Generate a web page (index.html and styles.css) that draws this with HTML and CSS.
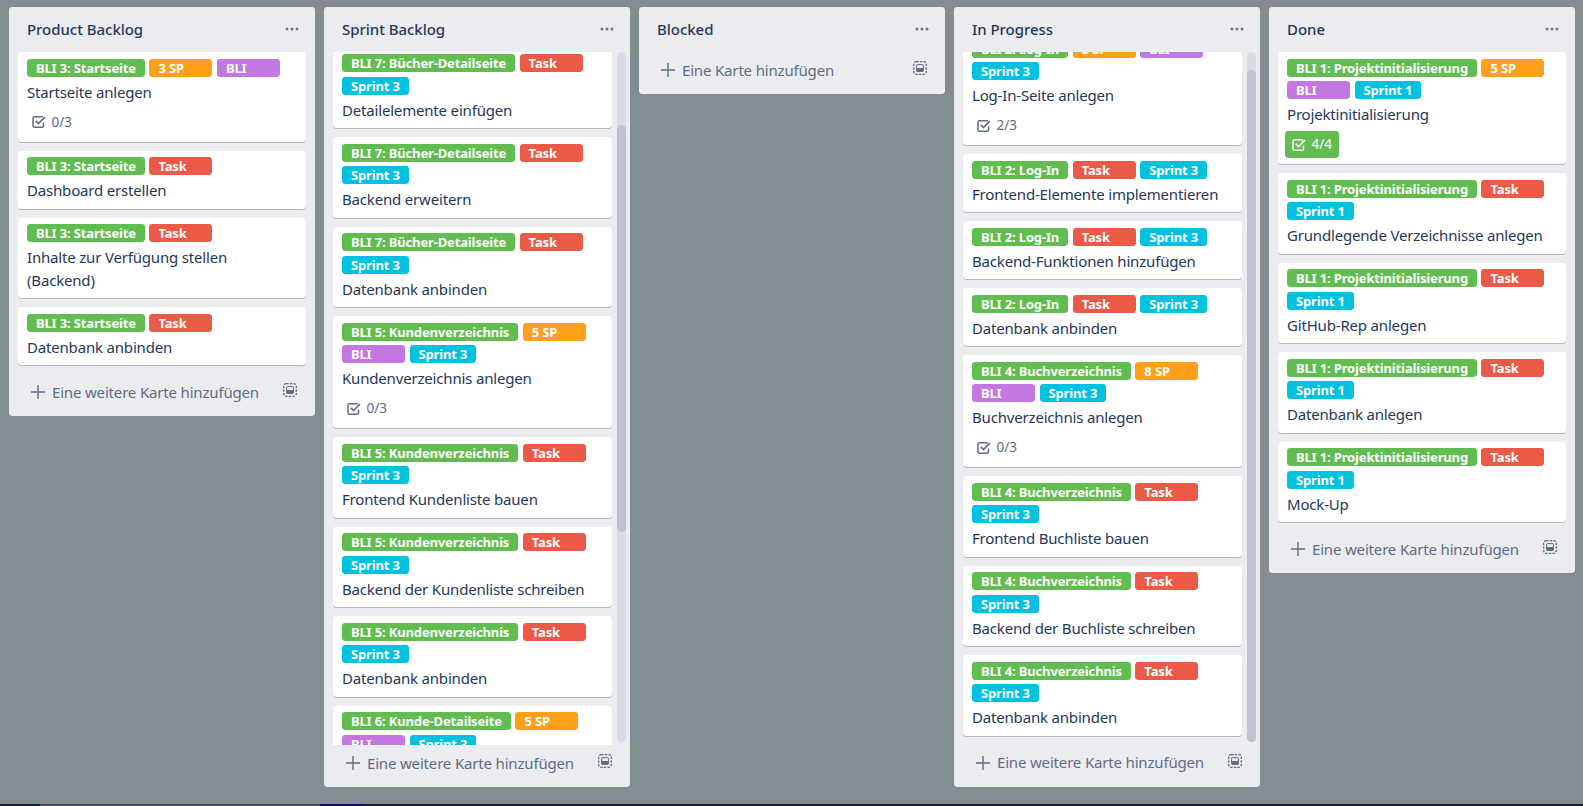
FILE: index.html
```html
<!DOCTYPE html>
<html lang="de">
<head>
    <meta charset="UTF-8">
    <title>Board</title>
    <link rel="stylesheet" href="styles.css">
</head>
<body>
    <svg class="sprites" width="0" height="0">
        <symbol id="dots" viewBox="0 0 14 4"><circle cx="2" cy="2" r="1.5"/><circle cx="7" cy="2" r="1.5"/><circle cx="12" cy="2" r="1.5"/></symbol>
        <symbol id="plus" viewBox="0 0 14 14"><path d="M7 0v14M0 7h14" fill="none" stroke="currentColor" stroke-width="1.4"/></symbol>
        <symbol id="check" viewBox="0 0 14 14"><path d="M11.5 7.5v3.2a1.6 1.6 0 0 1-1.6 1.6H2.6A1.6 1.6 0 0 1 1 10.7V3.3a1.6 1.6 0 0 1 1.6-1.6h8.3" fill="none" stroke="currentColor" stroke-width="1.5"/><path d="M3.8 5.8l2.7 2.7 6.5-6.5" fill="none" stroke="currentColor" stroke-width="1.7"/></symbol>
        <symbol id="template" viewBox="0 0 14 14"><rect x=".7" y=".7" width="12.6" height="12.6" rx="2.6" fill="none" stroke="currentColor" stroke-width="1.3" stroke-dasharray="2.4 1.2"/><rect x="3.6" y="3.6" width="6.8" height="6.8" rx=".6" fill="none" stroke="currentColor" stroke-width="1"/><rect x="3.6" y="7" width="6.8" height="3.4"/></symbol>
    </svg>

    <div class="board">
        <!-- Product Backlog -->
        <section class="list">
            <header class="list-header"><h2>Product Backlog</h2><svg class="menu"><use href="#dots"/></svg></header>
            <div class="list-body">
                <div class="cards">
                    <article class="card">
                        <div class="labels"><span class="label green">BLI 3: Startseite</span><span class="label orange">3 SP</span><span class="label purple">BLI</span></div>
                        <p class="title">Startseite anlegen</p>
                        <div class="badges"><span class="badge"><svg class="icon"><use href="#check"/></svg>0/3</span></div>
                    </article>
                    <article class="card">
                        <div class="labels"><span class="label green">BLI 3: Startseite</span><span class="label red">Task</span></div>
                        <p class="title">Dashboard erstellen</p>
                    </article>
                    <article class="card">
                        <div class="labels"><span class="label green">BLI 3: Startseite</span><span class="label red">Task</span></div>
                        <p class="title">Inhalte zur Verfügung stellen (Backend)</p>
                    </article>
                    <article class="card">
                        <div class="labels"><span class="label green">BLI 3: Startseite</span><span class="label red">Task</span></div>
                        <p class="title">Datenbank anbinden</p>
                    </article>
                </div>
            </div>
            <footer class="composer"><svg class="plus"><use href="#plus"/></svg><span class="composer-text">Eine weitere Karte hinzufügen</span><svg class="template"><use href="#template"/></svg></footer>
        </section>

        <!-- Sprint Backlog -->
        <section class="list">
            <header class="list-header"><h2>Sprint Backlog</h2><svg class="menu"><use href="#dots"/></svg></header>
            <div class="list-body scrolled">
                <div class="cards sprint-cards">
                    <article class="card">
                        <div class="labels"><span class="label green">BLI 7: Bücher-Detailseite</span><span class="label red">Task</span><span class="label sky">Sprint 3</span></div>
                        <p class="title">Detailelemente einfügen</p>
                    </article>
                    <article class="card">
                        <div class="labels"><span class="label green">BLI 7: Bücher-Detailseite</span><span class="label red">Task</span><span class="label sky">Sprint 3</span></div>
                        <p class="title">Backend erweitern</p>
                    </article>
                    <article class="card">
                        <div class="labels"><span class="label green">BLI 7: Bücher-Detailseite</span><span class="label red">Task</span><span class="label sky">Sprint 3</span></div>
                        <p class="title">Datenbank anbinden</p>
                    </article>
                    <article class="card">
                        <div class="labels"><span class="label green">BLI 5: Kundenverzeichnis</span><span class="label orange">5 SP</span><span class="label purple">BLI</span><span class="label sky">Sprint 3</span></div>
                        <p class="title">Kundenverzeichnis anlegen</p>
                        <div class="badges"><span class="badge"><svg class="icon"><use href="#check"/></svg>0/3</span></div>
                    </article>
                    <article class="card">
                        <div class="labels"><span class="label green">BLI 5: Kundenverzeichnis</span><span class="label red">Task</span><span class="label sky">Sprint 3</span></div>
                        <p class="title">Frontend Kundenliste bauen</p>
                    </article>
                    <article class="card">
                        <div class="labels"><span class="label green">BLI 5: Kundenverzeichnis</span><span class="label red">Task</span><span class="label sky">Sprint 3</span></div>
                        <p class="title">Backend der Kundenliste schreiben</p>
                    </article>
                    <article class="card">
                        <div class="labels"><span class="label green">BLI 5: Kundenverzeichnis</span><span class="label red">Task</span><span class="label sky">Sprint 3</span></div>
                        <p class="title">Datenbank anbinden</p>
                    </article>
                    <article class="card">
                        <div class="labels"><span class="label green">BLI 6: Kunde-Detailseite</span><span class="label orange">5 SP</span><span class="label purple">BLI</span><span class="label sky">Sprint 3</span></div>
                    </article>
                </div>
                <div class="track"><div class="thumb sprint-thumb"></div></div>
            </div>
            <footer class="composer"><svg class="plus"><use href="#plus"/></svg><span class="composer-text">Eine weitere Karte hinzufügen</span><svg class="template"><use href="#template"/></svg></footer>
        </section>

        <!-- Blocked -->
        <section class="list">
            <header class="list-header"><h2>Blocked</h2><svg class="menu"><use href="#dots"/></svg></header>
            <footer class="composer"><svg class="plus"><use href="#plus"/></svg><span class="composer-text">Eine Karte hinzufügen</span><svg class="template"><use href="#template"/></svg></footer>
        </section>

        <!-- In Progress -->
        <section class="list">
            <header class="list-header"><h2>In Progress</h2><svg class="menu"><use href="#dots"/></svg></header>
            <div class="list-body scrolled">
                <div class="cards progress-cards">
                    <article class="card">
                        <div class="labels"><span class="label green">BLI 2: Log-In</span><span class="label orange">5 SP</span><span class="label purple">BLI</span><span class="label sky">Sprint 3</span></div>
                        <p class="title">Log-In-Seite anlegen</p>
                        <div class="badges"><span class="badge"><svg class="icon"><use href="#check"/></svg>2/3</span></div>
                    </article>
                    <article class="card">
                        <div class="labels"><span class="label green">BLI 2: Log-In</span><span class="label red">Task</span><span class="label sky">Sprint 3</span></div>
                        <p class="title">Frontend-Elemente implementieren</p>
                    </article>
                    <article class="card">
                        <div class="labels"><span class="label green">BLI 2: Log-In</span><span class="label red">Task</span><span class="label sky">Sprint 3</span></div>
                        <p class="title">Backend-Funktionen hinzufügen</p>
                    </article>
                    <article class="card">
                        <div class="labels"><span class="label green">BLI 2: Log-In</span><span class="label red">Task</span><span class="label sky">Sprint 3</span></div>
                        <p class="title">Datenbank anbinden</p>
                    </article>
                    <article class="card">
                        <div class="labels"><span class="label green">BLI 4: Buchverzeichnis</span><span class="label orange">8 SP</span><span class="label purple">BLI</span><span class="label sky">Sprint 3</span></div>
                        <p class="title">Buchverzeichnis anlegen</p>
                        <div class="badges"><span class="badge"><svg class="icon"><use href="#check"/></svg>0/3</span></div>
                    </article>
                    <article class="card">
                        <div class="labels"><span class="label green">BLI 4: Buchverzeichnis</span><span class="label red">Task</span><span class="label sky">Sprint 3</span></div>
                        <p class="title">Frontend Buchliste bauen</p>
                    </article>
                    <article class="card">
                        <div class="labels"><span class="label green">BLI 4: Buchverzeichnis</span><span class="label red">Task</span><span class="label sky">Sprint 3</span></div>
                        <p class="title">Backend der Buchliste schreiben</p>
                    </article>
                    <article class="card">
                        <div class="labels"><span class="label green">BLI 4: Buchverzeichnis</span><span class="label red">Task</span><span class="label sky">Sprint 3</span></div>
                        <p class="title">Datenbank anbinden</p>
                    </article>
                </div>
                <div class="track"><div class="thumb progress-thumb"></div></div>
            </div>
            <footer class="composer"><svg class="plus"><use href="#plus"/></svg><span class="composer-text">Eine weitere Karte hinzufügen</span><svg class="template"><use href="#template"/></svg></footer>
        </section>

        <!-- Done -->
        <section class="list">
            <header class="list-header"><h2>Done</h2><svg class="menu"><use href="#dots"/></svg></header>
            <div class="list-body">
                <div class="cards">
                    <article class="card">
                        <div class="labels"><span class="label green">BLI 1: Projektinitialisierung</span><span class="label orange">5 SP</span><span class="label purple">BLI</span><span class="label sky">Sprint 1</span></div>
                        <p class="title">Projektinitialisierung</p>
                        <div class="badges"><span class="badge complete"><svg class="icon"><use href="#check"/></svg>4/4</span></div>
                    </article>
                    <article class="card">
                        <div class="labels"><span class="label green">BLI 1: Projektinitialisierung</span><span class="label red">Task</span><span class="label sky">Sprint 1</span></div>
                        <p class="title">Grundlegende Verzeichnisse anlegen</p>
                    </article>
                    <article class="card">
                        <div class="labels"><span class="label green">BLI 1: Projektinitialisierung</span><span class="label red">Task</span><span class="label sky">Sprint 1</span></div>
                        <p class="title">GitHub-Rep anlegen</p>
                    </article>
                    <article class="card">
                        <div class="labels"><span class="label green">BLI 1: Projektinitialisierung</span><span class="label red">Task</span><span class="label sky">Sprint 1</span></div>
                        <p class="title">Datenbank anlegen</p>
                    </article>
                    <article class="card">
                        <div class="labels"><span class="label green">BLI 1: Projektinitialisierung</span><span class="label red">Task</span><span class="label sky">Sprint 1</span></div>
                        <p class="title">Mock-Up</p>
                    </article>
                </div>
            </div>
            <footer class="composer"><svg class="plus"><use href="#plus"/></svg><span class="composer-text">Eine weitere Karte hinzufügen</span><svg class="template"><use href="#template"/></svg></footer>
        </section>
    </div>

    <div class="taskbar"><span class="seg-a"></span><span class="seg-b"></span><span class="seg-c"></span></div>
</body>
</html>
```

FILE: styles.css
```css
* {
    box-sizing: border-box;
}
html, body {
    height: 100%;
}
body {
    margin: 0;
    display: flex;
    flex-direction: column;
    overflow: hidden;
    background-color: #838c91;
    font-family: "Noto Sans", sans-serif;
    font-size: 15px;
    line-height: 22.25px;
    color: #253858;
}
.sprites {
    position: absolute;
}
.board {
    flex: 1;
    min-height: 0;
    display: flex;
    align-items: flex-start;
    gap: 9px;
    padding: 7px 0 17px 9px;
}
.list {
    width: 306px;
    max-height: 100%;
    flex-shrink: 0;
    display: flex;
    flex-direction: column;
    background-color: #ebecf0;
    border-radius: 3.4px;
}
.list-header {
    height: 45px;
    flex-shrink: 0;
    display: flex;
    align-items: center;
    justify-content: space-between;
    padding: 0 16px 1px 18px;
}
.list-header h2 {
    margin: 0;
    font-size: 15px;
    font-weight: 500;
    letter-spacing: -0.04px;
}
.menu {
    width: 14px;
    height: 4px;
    fill: #6b778c;
}
.list-body {
    display: flex;
    min-height: 0;
    padding: 0 9px;
}
.list-body.scrolled {
    flex: 1;
    gap: 5px;
    padding-right: 4px;
}
.cards {
    flex: 1;
    min-width: 0;
    overflow: hidden;
}
.sprint-cards .card:first-child {
    margin-top: -4.5px;
}
.progress-cards .card:first-child {
    margin-top: -19px;
}
.card {
    margin-bottom: 9px;
    padding: 6.75px 9px 2px;
    background: white;
    border-radius: 3.4px;
    box-shadow: 0 1px 0 rgba(9, 30, 66, 0.25);
}
.labels {
    display: flex;
    flex-wrap: wrap;
    gap: 4.5px;
    margin-bottom: 4.5px;
}
.label {
    min-width: 63px;
    height: 18px;
    padding: 0 9px;
    border-radius: 3.4px;
    font-size: 13px;
    font-weight: 700;
    line-height: 18px;
    letter-spacing: -0.15px;
    color: white;
}
.green { background-color: #61bd4f; }
.orange { background-color: #ff9f1a; }
.purple { background-color: #c377e0; }
.red { background-color: #eb5a46; }
.sky { background-color: #00c2e0; }
.title {
    margin: -0.5px 0 5px;
    letter-spacing: -0.18px;
}
.badges {
    display: flex;
    height: 31.5px;
    align-items: flex-start;
}
.badge {
    display: flex;
    align-items: center;
    gap: 6px;
    height: 27px;
    margin-left: -2.25px;
    padding: 1px 6.75px 0;
    border-radius: 3.4px;
    font-size: 13.5px;
    color: #5e6c84;
}
.badge.complete {
    background-color: #61bd4f;
    color: white;
}
.icon {
    width: 14px;
    height: 14px;
}
.track {
    width: 9px;
    flex-shrink: 0;
    margin-bottom: 3px;
    display: flex;
    flex-direction: column;
    background-color: #d9dbe3;
    border-radius: 4.5px;
}
.thumb {
    background-color: #bfc3cf;
    border-radius: 4.5px;
}
.sprint-thumb {
    margin-top: 73px;
    height: 407px;
}
.progress-thumb {
    margin-top: 18px;
    flex: 1;
}
.composer {
    height: 42px;
    flex-shrink: 0;
    display: flex;
    align-items: center;
    padding: 0 18px 6px 22px;
    color: #5e6c84;
}
.plus {
    width: 14px;
    height: 14px;
    margin-right: 7px;
}
.composer-text {
    flex: 1;
    font-size: 15px;
    letter-spacing: -0.17px;
}
.template {
    width: 14px;
    height: 14px;
    fill: currentColor;
    margin-top: -4px;
}
.taskbar {
    height: 2px;
    flex-shrink: 0;
    display: flex;
    background-color: #0f1c40;
}
.taskbar span {
    display: block;
}
.seg-a {
    width: 40px;
}
.seg-b {
    width: 280px;
    background-color: #45466a;
}
.seg-c {
    width: 43px;
    background-color: #0a0f6e;
}
```
